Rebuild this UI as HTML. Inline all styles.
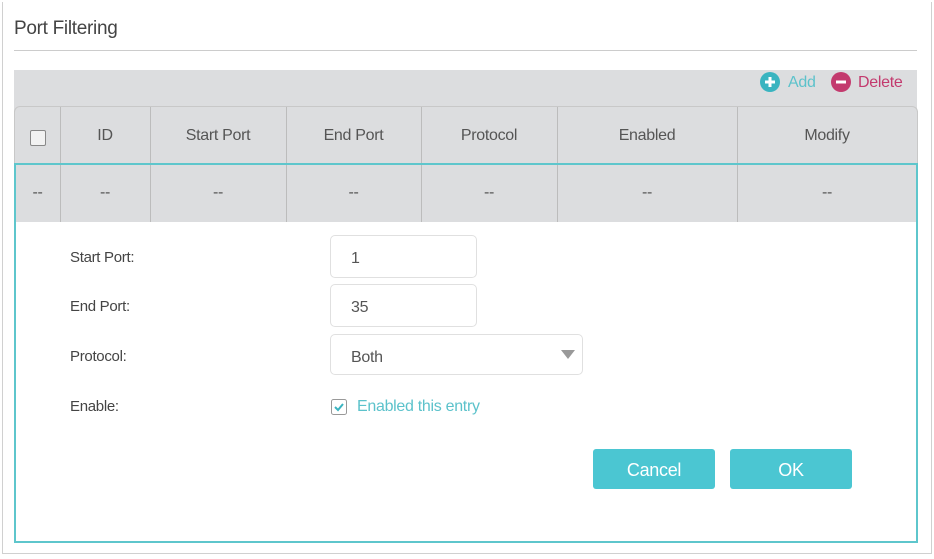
<!DOCTYPE html>
<html><head><style>
body{margin:0;width:934px;height:559px;background:#fff;font-family:"Liberation Sans",sans-serif;position:relative;overflow:hidden;letter-spacing:-0.3px}
.a{position:absolute}
.frame{left:2px;top:2px;width:928px;height:551px;border:1px solid #d0d0d0;border-top:none}
.gray{left:14px;top:70px;width:903px;height:152px;background:#dcdddf}
.hdr{left:14px;top:106px;width:902px;height:57px;border:1px solid #c8c8c8;border-bottom:none;border-radius:6px 6px 0 0}
.vl{width:1px;background:#bcbcbc;top:107px;height:115px}
.t{font-size:16px;color:#555;text-align:center}
.teal{left:14px;top:163px;width:900px;height:376px;border:2px solid #5ec6cc}
.wbg{left:16px;top:222px;width:898px;height:317px;background:#fff}
.lbl{font-size:15px;color:#444;left:70px}
.inp{border:1px solid #e0e0e0;border-radius:5px;background:#fff;font-size:16px;color:#555;box-sizing:border-box;padding-left:20px}
.btn{background:#4bc6d2;color:#fff;font-size:18px;text-align:center;line-height:42px;border-radius:3px;height:40px;width:122px;top:449px}
</style></head><body>
<div class="a frame"></div>
<div class="a" style="left:14px;top:18px;font-size:19px;color:#444">Port Filtering</div>
<div class="a" style="left:14px;top:50px;width:903px;height:1px;background:#ccc"></div>
<div class="a gray"></div>
<div class="a hdr"></div>
<svg class="a" style="left:760px;top:72px" width="20" height="20"><circle cx="10" cy="10" r="10" fill="#3ab4c0"/><path d="M10 5v10M5 10h10" stroke="#fff" stroke-width="3"/></svg>
<div class="a" style="left:788px;top:74px;font-size:16px;color:#5cc2cb">Add</div>
<svg class="a" style="left:831px;top:72px" width="20" height="20"><circle cx="10" cy="10" r="10" fill="#c33a6e"/><path d="M5 10h10" stroke="#fff" stroke-width="3"/></svg>
<div class="a" style="left:858px;top:74px;font-size:16px;color:#c33a6e">Delete</div>
<div class="a vl" style="left:60px"></div><div class="a vl" style="left:150px"></div><div class="a vl" style="left:286px"></div><div class="a vl" style="left:421px"></div><div class="a vl" style="left:557px"></div><div class="a vl" style="left:737px"></div>
<div class="a" style="left:30px;top:130px;width:14px;height:14px;border:1px solid #888;border-radius:2px;background:#f2f2f2"></div>
<div class="a t" style="left:60px;width:90px;top:127px">ID</div>
<div class="a t" style="left:150px;width:136px;top:127px">Start Port</div>
<div class="a t" style="left:286px;width:135px;top:127px">End Port</div>
<div class="a t" style="left:421px;width:136px;top:127px">Protocol</div>
<div class="a t" style="left:557px;width:180px;top:127px">Enabled</div>
<div class="a t" style="left:737px;width:180px;top:127px">Modify</div>
<div class="a teal"></div>
<div class="a wbg"></div>
<div class="a t" style="left:15px;width:45px;top:184px">--</div>
<div class="a t" style="left:60px;width:90px;top:184px">--</div>
<div class="a t" style="left:150px;width:136px;top:184px">--</div>
<div class="a t" style="left:286px;width:135px;top:184px">--</div>
<div class="a t" style="left:421px;width:136px;top:184px">--</div>
<div class="a t" style="left:557px;width:180px;top:184px">--</div>
<div class="a t" style="left:737px;width:180px;top:184px">--</div>
<div class="a lbl" style="top:249px">Start Port:</div>
<div class="a lbl" style="top:298px">End Port:</div>
<div class="a lbl" style="top:348px">Protocol:</div>
<div class="a lbl" style="top:398px">Enable:</div>
<div class="a inp" style="left:330px;top:235px;width:147px;height:43px;line-height:45px">1</div>
<div class="a inp" style="left:330px;top:284px;width:147px;height:43px;line-height:45px">35</div>
<div class="a inp" style="left:330px;top:334px;width:253px;height:41px;line-height:45px">Both</div>
<div class="a" style="left:561px;top:350px;width:0;height:0;border-left:7px solid transparent;border-right:7px solid transparent;border-top:9px solid #999"></div>
<svg class="a" style="left:331px;top:399px" width="16" height="16"><rect x="0.5" y="0.5" width="15" height="15" rx="2" fill="#fff" stroke="#999"/><path d="M4 8l3 3 5-6" stroke="#3ab4c0" stroke-width="2" fill="none"/></svg>
<div class="a" style="left:357px;top:398px;font-size:16px;color:#5cc2cb">Enabled this entry</div>
<div class="a btn" style="left:593px">Cancel</div>
<div class="a btn" style="left:730px">OK</div>
</body></html>
